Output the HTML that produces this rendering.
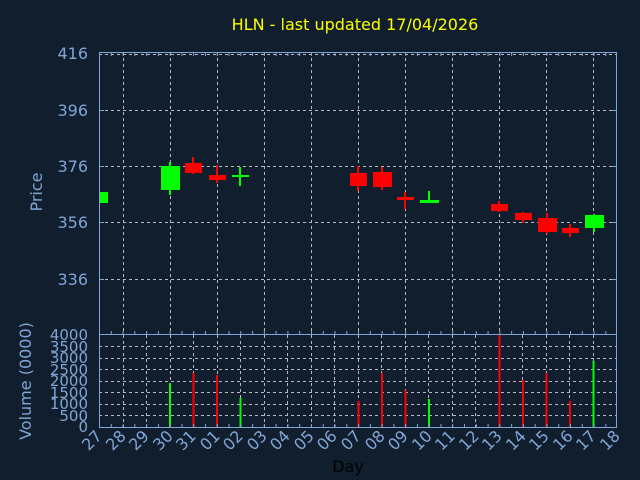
<!DOCTYPE html>
<html><head><meta charset="utf-8"><style>
html,body{margin:0;padding:0;background:#111e2e;}
svg{display:block;}
text{font-family:"DejaVu Sans","Liberation Sans",sans-serif;}
</style></head><body>
<svg width="640" height="480" viewBox="0 0 640 480" xmlns="http://www.w3.org/2000/svg">
<rect width="640" height="480" fill="#111e2e"/>
<text x="355" y="30" fill="#ffff00" font-size="16" text-anchor="middle">HLN - last updated 17/04/2026</text>
<g stroke="#b8b8c0" stroke-width="1" stroke-dasharray="3 3" fill="none">
<line x1="99" y1="54.5" x2="617" y2="54.5"/><line x1="99" y1="110.5" x2="617" y2="110.5"/><line x1="99" y1="166.5" x2="617" y2="166.5"/><line x1="99" y1="222.5" x2="617" y2="222.5"/><line x1="99" y1="279.5" x2="617" y2="279.5"/>
<line x1="123.5" y1="52" x2="123.5" y2="334"/><line x1="170.5" y1="52" x2="170.5" y2="334"/><line x1="217.5" y1="52" x2="217.5" y2="334"/><line x1="264.5" y1="52" x2="264.5" y2="334"/><line x1="311.5" y1="52" x2="311.5" y2="334"/><line x1="358.5" y1="52" x2="358.5" y2="334"/><line x1="405.5" y1="52" x2="405.5" y2="334"/><line x1="452.5" y1="52" x2="452.5" y2="334"/><line x1="499.5" y1="52" x2="499.5" y2="334"/><line x1="546.5" y1="52" x2="546.5" y2="334"/><line x1="593.5" y1="52" x2="593.5" y2="334"/>
<line x1="99" y1="346.5" x2="617" y2="346.5"/><line x1="99" y1="358.5" x2="617" y2="358.5"/><line x1="99" y1="369.5" x2="617" y2="369.5"/><line x1="99" y1="381.5" x2="617" y2="381.5"/><line x1="99" y1="392.5" x2="617" y2="392.5"/><line x1="99" y1="404.5" x2="617" y2="404.5"/><line x1="99" y1="415.5" x2="617" y2="415.5"/>
<line x1="123.5" y1="335" x2="123.5" y2="427"/><line x1="146.5" y1="335" x2="146.5" y2="427"/><line x1="170.5" y1="335" x2="170.5" y2="427"/><line x1="193.5" y1="335" x2="193.5" y2="427"/><line x1="217.5" y1="335" x2="217.5" y2="427"/><line x1="240.5" y1="335" x2="240.5" y2="427"/><line x1="264.5" y1="335" x2="264.5" y2="427"/><line x1="287.5" y1="335" x2="287.5" y2="427"/><line x1="311.5" y1="335" x2="311.5" y2="427"/><line x1="334.5" y1="335" x2="334.5" y2="427"/><line x1="358.5" y1="335" x2="358.5" y2="427"/><line x1="381.5" y1="335" x2="381.5" y2="427"/><line x1="405.5" y1="335" x2="405.5" y2="427"/><line x1="428.5" y1="335" x2="428.5" y2="427"/><line x1="452.5" y1="335" x2="452.5" y2="427"/><line x1="475.5" y1="335" x2="475.5" y2="427"/><line x1="499.5" y1="335" x2="499.5" y2="427"/><line x1="522.5" y1="335" x2="522.5" y2="427"/><line x1="546.5" y1="335" x2="546.5" y2="427"/><line x1="569.5" y1="335" x2="569.5" y2="427"/><line x1="593.5" y1="335" x2="593.5" y2="427"/>
</g>
<g stroke-width="2">
<rect x="99" y="192" width="9" height="11" fill="#00ff00"/>
<line x1="170" y1="162" x2="170" y2="195" stroke="#00ff00"/><rect x="161" y="166" width="19" height="24" fill="#00ff00"/>
<line x1="193" y1="157" x2="193" y2="174" stroke="#ff0000"/><rect x="185" y="163" width="17" height="10" fill="#ff0000"/>
<line x1="217" y1="165" x2="217" y2="183" stroke="#ff0000"/><rect x="209" y="175" width="17" height="5" fill="#ff0000"/>
<line x1="240" y1="167" x2="240" y2="186" stroke="#00ff00"/><rect x="232" y="175" width="17" height="2" fill="#00ff00"/>
<line x1="358" y1="166" x2="358" y2="191" stroke="#ff0000"/><rect x="350" y="173" width="17" height="13" fill="#ff0000"/>
<line x1="382" y1="167" x2="382" y2="190" stroke="#ff0000"/><rect x="373" y="172" width="19" height="15" fill="#ff0000"/>
<line x1="405" y1="192" x2="405" y2="209" stroke="#ff0000"/><rect x="397" y="197" width="17" height="3" fill="#ff0000"/>
<line x1="429" y1="191" x2="429" y2="203" stroke="#00ff00"/><rect x="420" y="200" width="19" height="3" fill="#00ff00"/>
<line x1="499" y1="201" x2="499" y2="212" stroke="#ff0000"/><rect x="491" y="204" width="17" height="7" fill="#ff0000"/>
<line x1="523" y1="212" x2="523" y2="223" stroke="#ff0000"/><rect x="515" y="213" width="17" height="7" fill="#ff0000"/>
<line x1="547" y1="213" x2="547" y2="234" stroke="#ff0000"/><rect x="538" y="218" width="19" height="14" fill="#ff0000"/>
<line x1="570" y1="224" x2="570" y2="237" stroke="#ff0000"/><rect x="562" y="228" width="17" height="5" fill="#ff0000"/>
<line x1="594" y1="214" x2="594" y2="232" stroke="#00ff00"/><rect x="585" y="215" width="19" height="13" fill="#00ff00"/>
</g>
<g stroke-width="2">
<line x1="170" y1="383" x2="170" y2="427" stroke="#00ff00"/>
<line x1="193.5" y1="373" x2="193.5" y2="427" stroke="#ff0000"/>
<line x1="217" y1="375" x2="217" y2="427" stroke="#ff0000"/>
<line x1="240.5" y1="398" x2="240.5" y2="427" stroke="#00ff00"/>
<line x1="358.5" y1="401" x2="358.5" y2="427" stroke="#ff0000"/>
<line x1="382" y1="373" x2="382" y2="427" stroke="#ff0000"/>
<line x1="405.5" y1="390" x2="405.5" y2="427" stroke="#ff0000"/>
<line x1="429" y1="399" x2="429" y2="427" stroke="#00ff00"/>
<line x1="499.5" y1="335" x2="499.5" y2="427" stroke="#ff0000"/>
<line x1="523" y1="380" x2="523" y2="427" stroke="#ff0000"/>
<line x1="546.5" y1="373" x2="546.5" y2="427" stroke="#ff0000"/>
<line x1="570" y1="401" x2="570" y2="427" stroke="#ff0000"/>
<line x1="593.5" y1="361" x2="593.5" y2="427" stroke="#00ff00"/>
</g>
<g stroke="#7fa6d6" fill="none">
<rect x="99.5" y="52.5" width="517" height="282"/>
<rect x="99.5" y="334.5" width="517" height="93"/>
<line x1="99" y1="54.5" x2="617" y2="54.5" stroke-width="3" stroke-dasharray="1 10.775"/>
<line x1="99" y1="332.5" x2="617" y2="332.5" stroke-width="3" stroke-dasharray="1 10.775"/>
<line x1="99" y1="425.5" x2="617" y2="425.5" stroke-width="3" stroke-dasharray="1 10.775"/>
<line x1="99" y1="110.5" x2="104" y2="110.5"/><line x1="99" y1="166.5" x2="104" y2="166.5"/><line x1="99" y1="222.5" x2="104" y2="222.5"/><line x1="99" y1="279.5" x2="104" y2="279.5"/>
<line x1="612" y1="110.5" x2="617" y2="110.5"/><line x1="612" y1="166.5" x2="617" y2="166.5"/><line x1="612" y1="222.5" x2="617" y2="222.5"/><line x1="612" y1="279.5" x2="617" y2="279.5"/>
</g>
<g fill="#7fa6d6" font-size="16" text-anchor="end">
<text x="88" y="59">416</text><text x="88" y="116">396</text><text x="88" y="172">376</text><text x="88" y="228">356</text><text x="88" y="285">336</text>
</g>
<text transform="translate(42,192) rotate(-90)" fill="#7fa6d6" font-size="16" text-anchor="middle">Price</text>
<g fill="#7fa6d6" font-size="15" text-anchor="end">
<text x="88" y="340">4000</text><text x="88" y="352">3500</text><text x="88" y="363">3000</text><text x="88" y="375">2500</text><text x="88" y="386">2000</text><text x="88" y="398">1500</text><text x="88" y="409">1000</text><text x="88" y="421">500</text><text x="88" y="432">0</text>
</g>
<text transform="translate(31,381) rotate(-90)" fill="#7fa6d6" font-size="16" text-anchor="middle">Volume (0000)</text>
<g fill="#7fa6d6" font-size="16" text-anchor="end">
<text transform="translate(103,437) rotate(-45)">27</text>
<text transform="translate(127,437) rotate(-45)">28</text>
<text transform="translate(150,437) rotate(-45)">29</text>
<text transform="translate(174,437) rotate(-45)">30</text>
<text transform="translate(197,437) rotate(-45)">31</text>
<text transform="translate(221,437) rotate(-45)">01</text>
<text transform="translate(244,437) rotate(-45)">02</text>
<text transform="translate(268,437) rotate(-45)">03</text>
<text transform="translate(291,437) rotate(-45)">04</text>
<text transform="translate(315,437) rotate(-45)">05</text>
<text transform="translate(338,437) rotate(-45)">06</text>
<text transform="translate(362,437) rotate(-45)">07</text>
<text transform="translate(386,437) rotate(-45)">08</text>
<text transform="translate(409,437) rotate(-45)">09</text>
<text transform="translate(433,437) rotate(-45)">10</text>
<text transform="translate(456,437) rotate(-45)">11</text>
<text transform="translate(480,437) rotate(-45)">12</text>
<text transform="translate(503,437) rotate(-45)">13</text>
<text transform="translate(527,437) rotate(-45)">14</text>
<text transform="translate(550,437) rotate(-45)">15</text>
<text transform="translate(574,437) rotate(-45)">16</text>
<text transform="translate(597,437) rotate(-45)">17</text>
<text transform="translate(621,437) rotate(-45)">18</text>
</g>
<text x="348" y="472" fill="#000000" font-size="16" text-anchor="middle">Day</text>
</svg>
</body></html>
